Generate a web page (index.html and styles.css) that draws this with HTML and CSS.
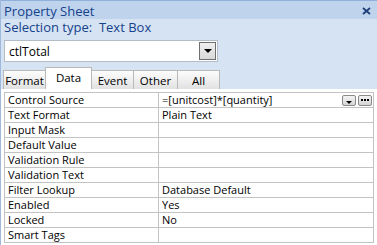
FILE: index.html
```html
<!DOCTYPE html>
<html>
  <head>
    <title>Property Sheet</title>
    <link rel="stylesheet" href="styles.css">
  </head>
  <body>
    <div class="sheet">
      <div class="title-bar">
        <span class="title">Property Sheet</span>
        <svg class="close" width="9" height="8" viewBox="0 0 9 8">
          <path d="M1 1 L8 7 M8 1 L1 7" stroke="#1e3f78" stroke-width="1.8" />
        </svg>
      </div>

      <div class="sel-type">Selection type:&nbsp; Text Box</div>

      <div class="combo">
        <span class="combo-text">ctlTotal</span>
        <span class="combo-btn"><span class="arrow"></span></span>
      </div>

      <div class="tabs">
        <div class="tab tab-format">Format</div>
        <div class="tab tab-data active">Data</div>
        <div class="tab tab-event">Event</div>
        <div class="tab tab-other">Other</div>
        <div class="tab tab-all">All</div>
      </div>

      <div class="panel">
        <table class="grid">
          <tr>
            <td class="name">Control Source</td>
            <td class="value">
              <div class="value-row">
                <span>=[unitcost]*[quantity]</span>
                <span class="mini-btns">
                  <span class="mini-btn"><span class="arrow small"></span></span>
                  <span class="mini-btn">
                    <svg width="8" height="2" viewBox="0 0 8 2">
                      <rect x="0" y="0" width="2" height="2" fill="#000" />
                      <rect x="3" y="0" width="2" height="2" fill="#000" />
                      <rect x="6" y="0" width="2" height="2" fill="#000" />
                    </svg>
                  </span>
                </span>
              </div>
            </td>
          </tr>
          <tr><td class="name">Text Format</td><td class="value">Plain Text</td></tr>
          <tr><td class="name">Input Mask</td><td class="value"></td></tr>
          <tr><td class="name">Default Value</td><td class="value"></td></tr>
          <tr><td class="name">Validation Rule</td><td class="value"></td></tr>
          <tr><td class="name">Validation Text</td><td class="value"></td></tr>
          <tr><td class="name">Filter Lookup</td><td class="value">Database Default</td></tr>
          <tr><td class="name">Enabled</td><td class="value">Yes</td></tr>
          <tr><td class="name">Locked</td><td class="value">No</td></tr>
          <tr><td class="name">Smart Tags</td><td class="value"></td></tr>
        </table>
      </div>
    </div>
  </body>
</html>
```

FILE: styles.css
```css
body {
  margin: 0;
  background: #d6e3f3;
  font-family: "Open Sans", "DejaVu Sans", sans-serif;
  font-size: 11px;
  color: #000;
}

.sheet {
  width: 377px;
  height: 245px;
  overflow: hidden;
  border-left: 1px solid #9fb9dc;
  box-sizing: border-box;
}

.title-bar {
  display: flex;
  justify-content: space-between;
  align-items: center;
  height: 19px;
  padding: 1px 6px 0 3px;
  background: #bfd3ed;
  border-top: 1px solid #8fb0da;
  box-sizing: border-box;
  color: #15428b;
  font-size: 13px;
}

.sel-type {
  height: 18px;
  line-height: 17px;
  padding-left: 3px;
  color: #15428b;
  font-size: 13px;
}

.combo {
  display: flex;
  justify-content: space-between;
  align-items: center;
  width: 214px;
  height: 22px;
  margin: 3px 0 0 3px;
  background: #fff;
  border: 1px solid #b4bcc8;
  box-sizing: border-box;
}

.combo-text {
  padding-left: 4px;
  font-size: 12px;
}

.combo-btn {
  display: flex;
  justify-content: center;
  align-items: center;
  width: 17px;
  height: 18px;
  margin-right: 1px;
  background: linear-gradient(#f0f0f0, #d8d8d8);
  border: 1px solid #6f6f6f;
  box-sizing: border-box;
}

.arrow {
  width: 0;
  height: 0;
  border-left: 4px solid transparent;
  border-right: 4px solid transparent;
  border-top: 4px solid #000;
}

.arrow.small {
  border-left-width: 3px;
  border-right-width: 3px;
  border-top-width: 3px;
  margin-top: 4px;
}

.tabs {
  display: flex;
  align-items: flex-end;
  height: 23px;
  margin-top: 4px;
  padding-left: 2px;
}

.tab {
  height: 19px;
  line-height: 19px;
  text-align: center;
  font-size: 11.5px;
  background: linear-gradient(#fdfdfd, #e1e1e1);
  border: 1px solid #b9b9b9;
  border-bottom: none;
  box-sizing: border-box;
  margin-right: -1px;
}

.tab.active {
  height: 22px;
  line-height: 19px;
  background: #fff;
  position: relative;
  z-index: 1;
}

.tab-format { width: 43px; }
.tab-data { width: 47px; }
.tab-event { width: 43px; }
.tab-other { width: 45px; }
.tab-all { width: 43px; }

.panel {
  background: #fff;
  padding: 3px 0 0 3px;
  height: 160px;
  box-sizing: border-box;
}

.grid {
  border-collapse: collapse;
  width: 370px;
}

.grid td {
  height: 14px;
  padding: 0 0 0 3px;
  border: 1px solid #c3c3c3;
  line-height: 14px;
  white-space: nowrap;
}

.grid .name {
  width: 150px;
}

.value-row {
  display: flex;
  justify-content: space-between;
  align-items: center;
}

.mini-btns {
  display: flex;
  gap: 2px;
  margin-right: 1px;
}

.mini-btn {
  display: flex;
  justify-content: center;
  align-items: center;
  width: 14px;
  height: 11px;
  background: linear-gradient(#f4f4f4, #d5d5d5);
  border: 1px solid #8a8a8a;
  border-radius: 2px;
  box-sizing: border-box;
}
```
